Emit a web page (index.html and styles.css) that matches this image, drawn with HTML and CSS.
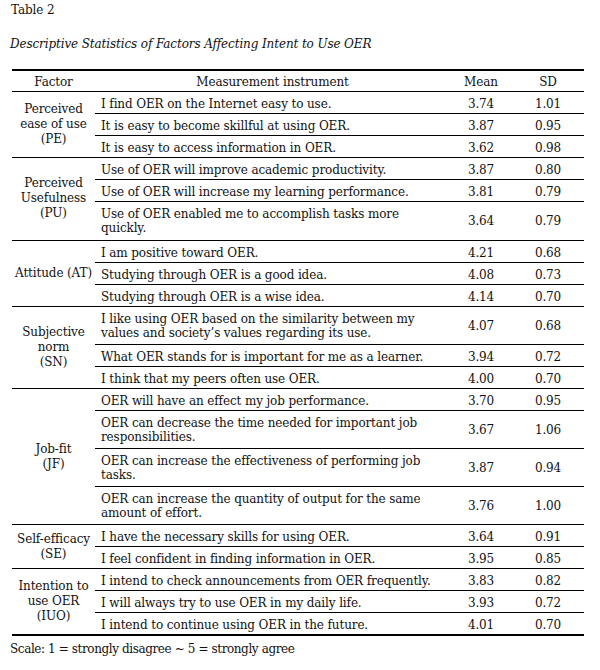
FILE: index.html
```html
<!DOCTYPE html>
<html lang="en">
<head>
<meta charset="utf-8">
<title>Table 2</title>
<link rel="stylesheet" href="styles.css">
</head>
<body>
<div class="page">
  <p class="label">Table 2</p>
  <p class="caption">Descriptive Statistics of Factors Affecting Intent to Use OER</p>
  <table class="stats">
    <colgroup>
      <col class="c-factor"><col class="c-item"><col class="c-mean"><col class="c-sd">
    </colgroup>
    <thead>
      <tr><th>Factor</th><th>Measurement instrument</th><th>Mean</th><th>SD</th></tr>
    </thead>
    <tbody>
      <tr><td class="factor" rowspan="3">Perceived<br>ease of use<br>(PE)</td><td class="item">I find OER on the Internet easy to use.</td><td class="num">3.74</td><td class="num">1.01</td></tr>
      <tr><td class="item">It is easy to become skillful at using OER.</td><td class="num">3.87</td><td class="num">0.95</td></tr>
      <tr><td class="item">It is easy to access information in OER.</td><td class="num">3.62</td><td class="num">0.98</td></tr>
    </tbody>
    <tbody>
      <tr><td class="factor" rowspan="3">Perceived<br>Usefulness<br>(PU)</td><td class="item">Use of OER will improve academic productivity.</td><td class="num">3.87</td><td class="num">0.80</td></tr>
      <tr><td class="item">Use of OER will increase my learning performance.</td><td class="num">3.81</td><td class="num">0.79</td></tr>
      <tr class="two tall"><td class="item">Use of OER enabled me to accomplish tasks more<br>quickly.</td><td class="num">3.64</td><td class="num">0.79</td></tr>
    </tbody>
    <tbody>
      <tr><td class="factor" rowspan="3">Attitude (AT)</td><td class="item">I am positive toward OER.</td><td class="num">4.21</td><td class="num">0.68</td></tr>
      <tr><td class="item">Studying through OER is a good idea.</td><td class="num">4.08</td><td class="num">0.73</td></tr>
      <tr><td class="item">Studying through OER is a wise idea.</td><td class="num">4.14</td><td class="num">0.70</td></tr>
    </tbody>
    <tbody>
      <tr class="two"><td class="factor" rowspan="3">Subjective<br>norm<br>(SN)</td><td class="item">I like using OER based on the similarity between my<br>values and society’s values regarding its use.</td><td class="num">4.07</td><td class="num">0.68</td></tr>
      <tr><td class="item">What OER stands for is important for me as a learner.</td><td class="num">3.94</td><td class="num">0.72</td></tr>
      <tr><td class="item">I think that my peers often use OER.</td><td class="num">4.00</td><td class="num">0.70</td></tr>
    </tbody>
    <tbody>
      <tr><td class="factor" rowspan="4">Job-fit<br>(JF)</td><td class="item">OER will have an effect my job performance.</td><td class="num">3.70</td><td class="num">0.95</td></tr>
      <tr class="two"><td class="item">OER can decrease the time needed for important job<br>responsibilities.</td><td class="num">3.67</td><td class="num">1.06</td></tr>
      <tr class="two"><td class="item">OER can increase the effectiveness of performing job<br>tasks.</td><td class="num">3.87</td><td class="num">0.94</td></tr>
      <tr class="two"><td class="item">OER can increase the quantity of output for the same<br>amount of effort.</td><td class="num">3.76</td><td class="num">1.00</td></tr>
    </tbody>
    <tbody>
      <tr><td class="factor" rowspan="2">Self-efficacy<br>(SE)</td><td class="item">I have the necessary skills for using OER.</td><td class="num">3.64</td><td class="num">0.91</td></tr>
      <tr><td class="item">I feel confident in finding information in OER.</td><td class="num">3.95</td><td class="num">0.85</td></tr>
    </tbody>
    <tbody class="last">
      <tr><td class="factor" rowspan="3">Intention to<br>use OER<br>(IUO)</td><td class="item">I intend to check announcements from OER frequently.</td><td class="num">3.83</td><td class="num">0.82</td></tr>
      <tr><td class="item">I will always try to use OER in my daily life.</td><td class="num">3.93</td><td class="num">0.72</td></tr>
      <tr><td class="item">I intend to continue using OER in the future.</td><td class="num">4.01</td><td class="num">0.70</td></tr>
    </tbody>
  </table>
  <p class="note">Scale: 1 = strongly disagree ~ 5 = strongly agree</p>
</div>
</body>
</html>
```
FILE: styles.css
```css
html, body {
  margin: 0;
  padding: 0;
  background: #ffffff;
}
body {
  font-family: "DejaVu Serif", "Liberation Serif", serif;
  font-size: 12px;
  letter-spacing: -0.12px;
  color: #111111;
}
.page {
  padding: 2.5px 0 0 10px;
}
.label {
  margin: 0;
  line-height: 14px;
  padding-left: 1px;
}
.caption {
  margin: 20px 0 0 0;
  line-height: 14px;
  font-style: italic;
}
.stats {
  margin: 18px 0 0 2px;
  border-collapse: collapse;
  table-layout: fixed;
  width: 572px;
  border-top: 2px solid #000;
}
.c-factor { width: 83px; }
.c-item { width: 355px; }
.c-mean { width: 62px; }
.c-sd { width: 72px; }
.stats th {
  font-weight: normal;
  text-align: center;
  line-height: 14px;
  padding: 4px 0 2px;
  border-bottom: 1px solid #000;
}
.stats td {
  line-height: 14px;
  padding: 5px 0 2px;
  border-bottom: 1px solid #000;
  vertical-align: middle;
}
.stats tr.two td {
  padding-bottom: 4px;
}
.stats tr.tall td {
  padding-bottom: 5.5px;
}
.stats td.factor,
.stats tr.two td.factor {
  text-align: center;
  padding: 0;
  line-height: 15px;
}
.stats td.item {
  padding-left: 6px;
  white-space: nowrap;
}
.stats td.num {
  text-align: center;
}
.stats tbody.last tr:last-child td,
.stats tbody.last td.factor {
  border-bottom: 2px solid #000;
}
.note {
  margin: 6px 0 0 0;
  line-height: 14px;
  letter-spacing: -0.4px;
}
```
